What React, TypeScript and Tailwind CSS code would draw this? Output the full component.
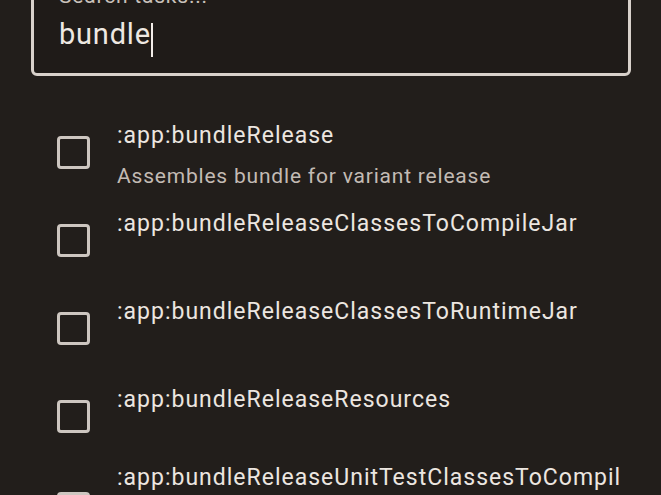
import React from 'react';

interface Task {
  name: string;
  description?: string;
}

const tasks: Task[] = [
  { name: ':app:bundleRelease', description: 'Assembles bundle for variant release' },
  { name: ':app:bundleReleaseClassesToCompileJar' },
  { name: ':app:bundleReleaseClassesToRuntimeJar' },
  { name: ':app:bundleReleaseResources' },
  { name: ':app:bundleReleaseUnitTestClassesToCompileJar' },
];

const TaskRow: React.FC<{ task: Task }> = ({ task }) => (
  <div className="flex items-center min-h-[88px] pl-[57px] pr-[36px]">
    {/* checkbox sits a touch above the text centre */}
    <div className="shrink-0 w-[33px] h-[33px] -mt-[8px] rounded-[4px] border-[3px] border-[#cdc6c0]" />
    <div className="ml-[27px] flex flex-col min-w-0">
      <div className="text-[23px] leading-[28px] tracking-[1px] text-[#ece6e0] break-all">{task.name}</div>
      <div className="mt-[12px] text-[21px] leading-[28px] h-[28px] tracking-[0.8px] text-[#c3bbb4]">
        {task.description ?? ''}
      </div>
    </div>
  </div>
);

export default function App() {
  return (
    <div
      className="w-full h-[495px] overflow-hidden bg-[#221e1b] flex flex-col"
      style={{ fontFamily: 'Roboto, "Noto Sans", sans-serif' }}
    >
      {/* search field, top edge scrolled off-screen */}
      <div className="-mt-[30px] ml-[31px] w-[600px] h-[106px] shrink-0 rounded-[6px] border-[3px] border-[#d8d1cb] bg-[#1f1b18] pt-[11px] pl-[25px]">
        <div className="text-[21px] leading-[24px] tracking-[0.8px] text-[#c9c1ba]">Search tasks...</div>
        <div className="mt-[8px] flex items-start">
          <span className="text-[29px] leading-[36px] tracking-[0.8px] text-[#eee8e2]">bundle</span>
          <span className="mt-[7px] w-[2px] h-[34px] bg-[#f2ede8]" />
        </div>
      </div>

      <div className="mt-[36px] flex flex-col">
        {tasks.map(t => (
          <TaskRow key={t.name} task={t} />
        ))}
      </div>
    </div>
  );
}
